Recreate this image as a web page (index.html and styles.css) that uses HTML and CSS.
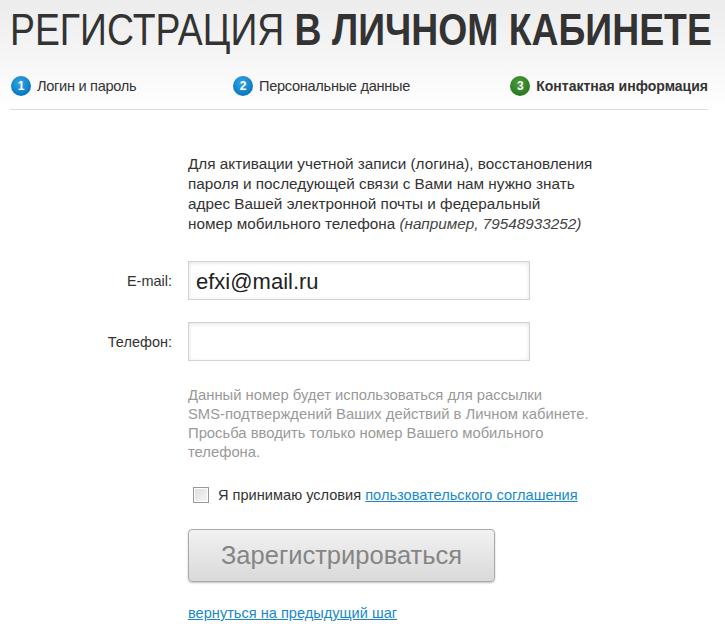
FILE: index.html
```html
<!doctype html>
<html lang="ru">
    <head>
        <title>Регистрация в личном кабинете</title>
        <meta charset="utf-8" />
        <meta name="viewport" content="width=device-width, initial-scale=1"/>
        <link rel="stylesheet" href="styles.css">
    </head>
    <body>
        <div class="page">
            <div class="top">
                <h1>Регистрация <b>в личном кабинете</b></h1>
                <ol class="steps">
                    <li class="step"><span class="num">1</span>Логин и пароль</li>
                    <li class="step"><span class="num">2</span>Персональные данные</li>
                    <li class="step current"><span class="num">3</span>Контактная информация</li>
                </ol>
            </div>

            <form class="reg">
                <p class="intro">Для активации учетной записи (логина), восстановления пароля и последующей связи с Вами нам нужно знать адрес Вашей электронной почты и федеральный номер&nbsp;мобильного телефона <i>(например, 79548933252)</i></p>

                <div class="row">
                    <label for="email">E-mail:</label>
                    <input type="text" id="email" value="efxi@mail.ru">
                </div>
                <div class="row">
                    <label for="phone">Телефон:</label>
                    <input type="text" id="phone">
                </div>

                <p class="hint">Данный номер будет использоваться для рассылки <span class="nw">SMS-подтверждений</span> Ваших действий в Личном кабинете. Просьба вводить только номер Вашего мобильного телефона.</p>

                <div class="agree">
                    <span class="box"></span>
                    Я принимаю условия&nbsp;<a href="#">пользовательского соглашения</a>
                </div>

                <button type="button" class="submit">Зарегистрироваться</button>

                <a class="back" href="#">вернуться на предыдущий шаг</a>
            </form>
        </div>
    </body>
</html>
```

FILE: styles.css
```css
body {
    margin: 0;
    font-family: "Liberation Sans", Arial, sans-serif;
    color: #333;
    background: #fff;
}
.top {
    background: linear-gradient(#ececec, #fff 110px);
    padding: 0 17px 0 10px;
}
h1 {
    margin: 0;
    padding: 4px 0 0 0;
    font-size: 45px;
    font-weight: normal;
    line-height: 52px;
    text-transform: uppercase;
    white-space: nowrap;
    color: #333;
    transform: scaleX(0.83);
    transform-origin: left center;
}
h1 b {
    font-weight: bold;
}
.steps {
    list-style: none;
    margin: 0;
    padding: 19px 0 12px 0;
    display: flex;
    border-bottom: 1px solid #ddd;
    font-size: 14.6px;
    letter-spacing: -0.3px;
}
.step {
    display: flex;
    align-items: center;
    height: 22px;
}
.step:nth-child(1) {
    width: 222px;
}
.step:nth-child(2) {
    width: 274px;
}
.num {
    display: inline-block;
    width: 20px;
    height: 20px;
    line-height: 20px;
    border-radius: 50%;
    margin: 0 6px 0 1px;
    text-align: center;
    font-size: 12px;
    font-weight: bold;
    color: #fff;
    letter-spacing: 0;
    background: radial-gradient(circle at 45% 35%, #35a8e8, #0a78c0 70%);
}
.current {
    margin-left: auto;
    font-weight: bold;
    font-size: 14px;
    letter-spacing: 0;
}
.current .num {
    background: radial-gradient(circle at 45% 35%, #4e9c3a, #2a7a22 70%);
}
.reg {
    padding: 0 0 0 188px;
}
.intro {
    margin: 44px 0 0 0;
    width: 410px;
    font-size: 15.3px;
    line-height: 20px;
    color: #333;
}
.intro i {
    color: #444;
}
.row {
    display: flex;
    align-items: center;
    margin-left: -188px;
    margin-top: 27px;
}
.row + .row {
    margin-top: 22px;
}
.row label {
    width: 172px;
    margin-right: 16px;
    text-align: right;
    font-size: 14.5px;
    color: #333;
}
.row input {
    box-sizing: border-box;
    width: 342px;
    height: 39px;
    border: 1px solid #cfd3dc;
    box-shadow: inset 0 1px 4px rgba(0, 0, 0, 0.12);
    padding: 2px 7px 0 7px;
    font-family: "Liberation Sans", Arial, sans-serif;
    font-size: 22px;
    color: #222;
    outline: none;
}
.hint {
    margin: 25px 0 0 0;
    width: 405px;
    font-size: 14.8px;
    line-height: 19px;
    color: #999;
}
.nw {
    white-space: nowrap;
}
.agree {
    display: flex;
    align-items: center;
    margin: 25px 0 0 5px;
    font-size: 14.6px;
    color: #333;
}
.box {
    display: inline-block;
    width: 14px;
    height: 14px;
    border: 1px solid #999;
    background: linear-gradient(135deg, #ddd, #f8f8f8);
    box-shadow: inset 0 0 0 1px #fff;
    margin-right: 9px;
}
a {
    color: #1789c9;
    text-decoration: underline;
}
.submit {
    display: block;
    margin-top: 26px;
    width: 307px;
    height: 53px;
    border: 1px solid #aaa;
    border-radius: 4px;
    background: linear-gradient(#f2f2f2, #d9d9d9);
    box-shadow: 0 1px 2px rgba(0, 0, 0, 0.25);
    font-family: "Liberation Sans", Arial, sans-serif;
    font-size: 25.5px;
    color: #858585;
    cursor: pointer;
}
.back {
    display: inline-block;
    margin-top: 23px;
    font-size: 14.6px;
}
```
